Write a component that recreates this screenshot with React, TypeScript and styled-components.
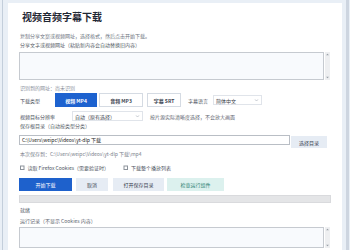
import React from "react";
import styled, { createGlobalStyle } from "styled-components";

const Global = createGlobalStyle`
  html, body { margin: 0; padding: 0; }
  body {
    width: 350px; height: 250px; overflow: hidden;
    background: #e9eff6;
    font-family: "Noto Sans CJK SC", "Noto Sans", sans-serif;
  }
`;

/* The window is laid out at 2x and shown at half size, like the reference capture. */
const Viewport = styled.div`
  width: 350px;
  height: 250px;
  overflow: hidden;
`;

const Stage = styled.div`
  display: flex;
  width: 700px;
  height: 500px;
  padding-top: 6px;
  box-sizing: border-box;
  transform: scale(0.5);
  transform-origin: 0 0;
`;

const Rail = styled.div<{ $w: number; $c: string }>`
  width: ${(p) => p.$w}px;
  flex: none;
  align-self: stretch;
  margin-top: -6px;
  background: ${(p) => p.$c};
`;

const Gap = styled.div<{ $w: number }>`
  width: ${(p) => p.$w}px;
  flex: none;
`;

const Card = styled.div`
  width: 668px;
  flex: none;
  background: #ffffff;
  padding: 16px 0 0 22px;
  box-sizing: border-box;
  display: flex;
  flex-direction: column;
`;

const Title = styled.div`
  font-size: 20px;
  line-height: 24px;
  font-weight: 700;
  color: #1f2733;
  margin-left: 6px;
`;

const Small = styled.div<{ $mt?: number; $c?: string }>`
  font-size: 10px;
  line-height: 18px;
  color: ${(p) => p.$c || "#555c66"};
  margin-top: ${(p) => p.$mt ?? 0}px;
  margin-left: 2px;
  white-space: nowrap;
`;

const BoxRow = styled.div<{ $mt: number }>`
  display: flex;
  align-items: stretch;
  margin-top: ${(p) => p.$mt}px;
`;

const TextBox = styled.div<{ $h: number }>`
  width: 610px;
  height: ${(p) => p.$h}px;
  box-sizing: border-box;
  border: 2px solid #c6cad0;
  background: #f8fafd;
`;

const Scroll = styled.div`
  width: 10px;
  margin-left: 2px;
  background: #eeeff1;
  display: flex;
  flex-direction: column;
  justify-content: space-between;
  align-items: center;
  padding: 3px 0;
  box-sizing: border-box;
`;

const Row = styled.div<{ $mt: number; $h: number }>`
  display: flex;
  align-items: center;
  height: ${(p) => p.$h}px;
  margin-top: ${(p) => p.$mt}px;
`;

const Label = styled.span<{ $w?: number; $ml?: number }>`
  font-size: 10px;
  color: #4a515b;
  width: ${(p) => (p.$w ? `${p.$w}px` : "auto")};
  flex: none;
  white-space: nowrap;
  margin-left: ${(p) => p.$ml ?? 2}px;
`;

const Seg = styled.div<{ $w: number; $on?: boolean; $ml: number }>`
  width: ${(p) => p.$w}px;
  height: 28px;
  margin-left: ${(p) => p.$ml}px;
  box-sizing: border-box;
  display: flex;
  align-items: center;
  justify-content: center;
  font-size: 10px;
  font-weight: 700;
  background: ${(p) => (p.$on ? "#1d62cf" : "#ffffff")};
  color: ${(p) => (p.$on ? "#ffffff" : "#3b4350")};
  border: 2px solid ${(p) => (p.$on ? "#1d62cf" : "#d5dbe3")};
  flex: none;
`;

const Select = styled.div<{ $w: number; $ml: number }>`
  width: ${(p) => p.$w}px;
  height: 20px;
  margin-left: ${(p) => p.$ml}px;
  box-sizing: border-box;
  border: 2px solid #e0e4ea;
  background: #ffffff;
  display: flex;
  align-items: center;
  justify-content: space-between;
  padding: 0 5px 0 4px;
  font-size: 10px;
  color: #3a414b;
  flex: none;
  white-space: nowrap;
`;

const Hint = styled.span<{ $ml: number }>`
  font-size: 10px;
  color: #5d646e;
  margin-left: ${(p) => p.$ml}px;
  white-space: nowrap;
`;

const PathRow = styled.div`
  display: flex;
  align-items: flex-start;
  margin-top: 10px;
  height: 26px;
`;

const PathInput = styled.div`
  width: 542px;
  height: 20px;
  box-sizing: border-box;
  border: 2px solid #b9bec5;
  background: #ffffff;
  font-size: 10px;
  line-height: 16px;
  padding-left: 4px;
  color: #222;
  white-space: nowrap;
`;

type Kind = "primary" | "plain" | "teal";

const Btn = styled.div<{ $w: number; $h: number; $ml: number; $kind: Kind; $mt?: number }>`
  width: ${(p) => p.$w}px;
  height: ${(p) => p.$h}px;
  margin-left: ${(p) => p.$ml}px;
  margin-top: ${(p) => p.$mt ?? 0}px;
  flex: none;
  display: flex;
  align-items: center;
  justify-content: center;
  font-size: 10px;
  white-space: nowrap;
  background: ${(p) => (p.$kind === "primary" ? "#1e61cc" : p.$kind === "teal" ? "#dcf1ee" : "#e6ecf4")};
  color: ${(p) => (p.$kind === "primary" ? "#ffffff" : p.$kind === "teal" ? "#2a7f72" : "#3a4250")};
`;

const Check = styled.span<{ $ml: number }>`
  width: 9px;
  height: 9px;
  border: 2px solid #8d939b;
  box-sizing: border-box;
  flex: none;
  margin-left: ${(p) => p.$ml}px;
  background: #fff;
`;

const Progress = styled.div`
  width: 624px;
  height: 16px;
  margin-top: 8px;
  background: #e4e5e7;
  border: 2px solid #d9dadd;
  box-sizing: border-box;
`;

const Chevron = () => (
  <svg width="8" height="5" viewBox="0 0 8 5">
    <path d="M0.5 0.5 L4 4 L7.5 0.5" fill="none" stroke="#a3a9b1" strokeWidth="1.2" />
  </svg>
);

const Arrow = ({ up }: { up?: boolean }) => (
  <svg width="6" height="4" viewBox="0 0 6 4">
    <path d={up ? "M0 4 L3 0 L6 4 Z" : "M0 0 L3 4 L6 0 Z"} fill="#9aa0a8" />
  </svg>
);

const ScrollBar = () => (
  <Scroll>
    <Arrow up />
    <Arrow />
  </Scroll>
);

export default function App() {
  return (
    <>
      <Global />
      <Viewport>
        <Stage>
          <Gap $w={4} />
          <Rail $w={2} $c="#c3cedb" />
          <Gap $w={10} />
          <Card>
            <Title>视频音频字幕下载</Title>
            <Small $mt={16} $c="#6d7580">复制分享文案或视频网址，选择格式，然后点击开始下载。</Small>
            <Small>分享文字或视频网址（粘贴新内容会自动替换旧内容）</Small>
            <BoxRow $mt={6}>
              <TextBox $h={56} />
              <ScrollBar />
            </BoxRow>
            <Small $mt={6} $c="#8a9099">识别到的网址：尚未识别</Small>
            <Row $mt={2} $h={28}>
              <Label $w={70}>下载类型</Label>
              <Seg $w={84} $ml={0} $on>视频 MP4</Seg>
              <Seg $w={88} $ml={4}>音频 MP3</Seg>
              <Seg $w={68} $ml={8}>字幕 SRT</Seg>
              <Label $ml={14}>字幕语言</Label>
              <Select $w={98} $ml={10}>
                <span>简体中文</span>
                <Chevron />
              </Select>
            </Row>
            <Row $mt={8} $h={20}>
              <Label $w={104}>视频目标分辨率</Label>
              <Select $w={142} $ml={0}>
                <span>自动（原有选择）</span>
                <Chevron />
              </Select>
              <Hint $ml={14}>按片源实际清晰度选择，不会放大画面</Hint>
            </Row>
            <Small>保存根目录（自动按类型分类）</Small>
            <PathRow>
              <PathInput>C:\Users\weipc\Videos\yt-dlp 下载</PathInput>
              <Btn $w={72} $h={24} $ml={2} $mt={2} $kind="plain">选择目录</Btn>
            </PathRow>
            <Small $mt={2} $c="#7b828c">本次保存到：C:\Users\weipc\Videos\yt-dlp 下载\mp4</Small>
            <Row $mt={10} $h={18}>
              <Check $ml={2} />
              <Label $w={192} $ml={6}>读取 Firefox Cookies（需要验证时）</Label>
              <Check $ml={0} />
              <Label $ml={6}>下载整个播放列表</Label>
            </Row>
            <Row $mt={12} $h={26}>
              <Btn $w={106} $h={26} $ml={0} $kind="primary">开始下载</Btn>
              <Btn $w={64} $h={26} $ml={8} $kind="plain">取消</Btn>
              <Btn $w={102} $h={26} $ml={10} $kind="plain">打开保存目录</Btn>
              <Btn $w={114} $h={26} $ml={6} $kind="teal">检查运行组件</Btn>
            </Row>
            <Progress />
            <Small $mt={4} $c="#4a515b">就绪</Small>
            <Small $mt={4} $c="#5d646e">运行记录（不显示 Cookies 内容）</Small>
            <BoxRow $mt={4}>
              <TextBox $h={42} />
              <ScrollBar />
            </BoxRow>
          </Card>
          <Gap $w={8} />
          <Rail $w={6} $c="#cdd5e0" />
        </Stage>
      </Viewport>
    </>
  );
}
